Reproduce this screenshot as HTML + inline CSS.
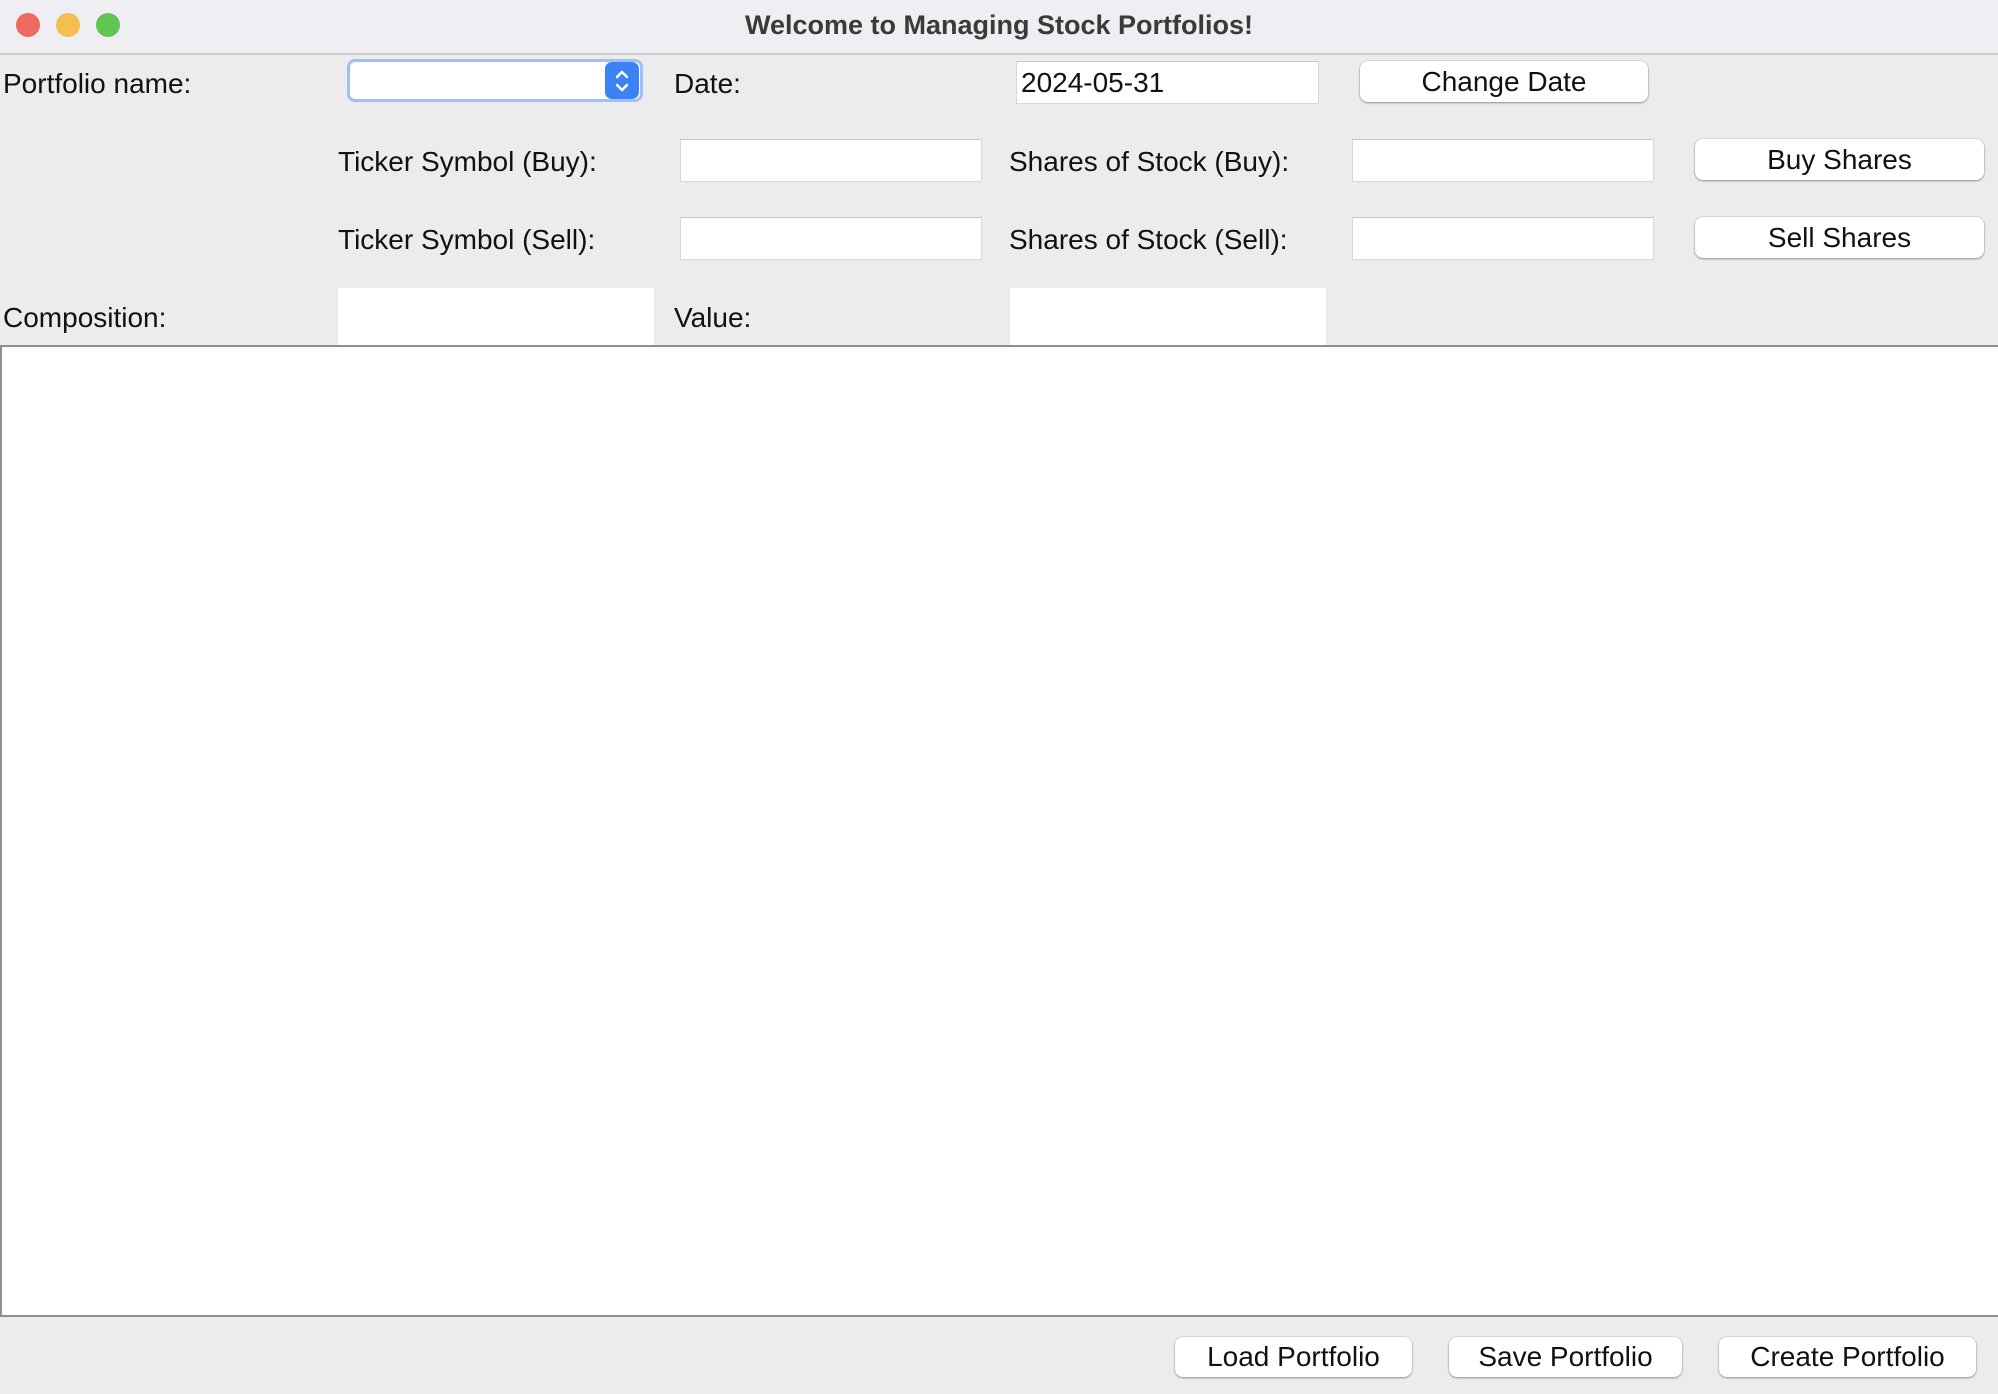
<!DOCTYPE html>
<html><head><meta charset="utf-8"><style>
*{box-sizing:border-box;margin:0;padding:0}
body{width:1998px;height:1394px;background:#ececec;position:relative;overflow:hidden;font-family:"Liberation Sans",sans-serif;color:#111}
.a{position:absolute}
.tb{left:0;top:0;width:1998px;height:55px;background:#efeef2;border-bottom:2px solid #cfcfcf}
.dot{width:24px;height:24px;border-radius:50%;top:13px}
.t{font-size:27px;font-weight:bold;color:#3a3a3a;left:0;width:1998px;text-align:center;top:10px}
.l{font-size:28px;line-height:32px;white-space:nowrap}
.f{background:#fff;border:1px solid #d8d8d8;border-top-color:#c8c8c8}
.b{background:#fff;border-radius:8px;box-shadow:0 1px 2px rgba(0,0,0,.35),0 0 0 1px rgba(0,0,0,.06);font-size:28px;text-align:center;white-space:nowrap}
</style></head><body>
<div class="a tb"></div>
<div class="a dot" style="left:16px;background:#ed6a5e"></div>
<div class="a dot" style="left:56px;background:#f5bf4f"></div>
<div class="a dot" style="left:96px;background:#61c554"></div>
<div class="a t">Welcome to Managing Stock Portfolios!</div>

<div class="a l" style="left:3px;top:68px">Portfolio name:</div>
<div class="a" style="left:347px;top:59px;width:296px;height:43px;background:#fff;border:3px solid #9ec0f2;border-radius:8px"></div>
<div class="a" style="left:605px;top:62px;width:34px;height:37px;background:#3b82f6;border-radius:7px"></div>
<svg class="a" style="left:612px;top:66px" width="20" height="30" viewBox="0 0 20 30"><path d="M5 11 L10 6 L15 11 M5 19 L10 24 L15 19" stroke="#fff" stroke-width="2.5" fill="none" stroke-linecap="round" stroke-linejoin="round"/></svg>
<div class="a l" style="left:674px;top:68px">Date:</div>
<div class="a f" style="left:1016px;top:61px;width:303px;height:43px"></div>
<div class="a l" style="left:1021px;top:67px">2024-05-31</div>
<div class="a b" style="left:1360px;top:61px;width:288px;height:41px;line-height:41px">Change Date</div>

<div class="a l" style="left:338px;top:146px">Ticker Symbol (Buy):</div>
<div class="a f" style="left:680px;top:139px;width:302px;height:43px"></div>
<div class="a l" style="left:1009px;top:146px">Shares of Stock (Buy):</div>
<div class="a f" style="left:1352px;top:139px;width:302px;height:43px"></div>
<div class="a b" style="left:1695px;top:139px;width:289px;height:41px;line-height:41px">Buy Shares</div>

<div class="a l" style="left:338px;top:224px">Ticker Symbol (Sell):</div>
<div class="a f" style="left:680px;top:217px;width:302px;height:43px"></div>
<div class="a l" style="left:1009px;top:224px">Shares of Stock (Sell):</div>
<div class="a f" style="left:1352px;top:217px;width:302px;height:43px"></div>
<div class="a b" style="left:1695px;top:217px;width:289px;height:41px;line-height:41px">Sell Shares</div>

<div class="a l" style="left:3px;top:302px">Composition:</div>
<div class="a" style="left:338px;top:288px;width:316px;height:58px;background:#fff"></div>
<div class="a l" style="left:674px;top:302px">Value:</div>
<div class="a" style="left:1010px;top:288px;width:316px;height:58px;background:#fff"></div>

<div class="a" style="left:0;top:345px;width:2010px;height:972px;background:#fff;border:2px solid #8e8e8e"></div>

<div class="a b" style="left:1175px;top:1337px;width:237px;height:40px;line-height:40px">Load Portfolio</div>
<div class="a b" style="left:1449px;top:1337px;width:233px;height:40px;line-height:40px">Save Portfolio</div>
<div class="a b" style="left:1719px;top:1337px;width:257px;height:40px;line-height:40px">Create Portfolio</div>
</body></html>
